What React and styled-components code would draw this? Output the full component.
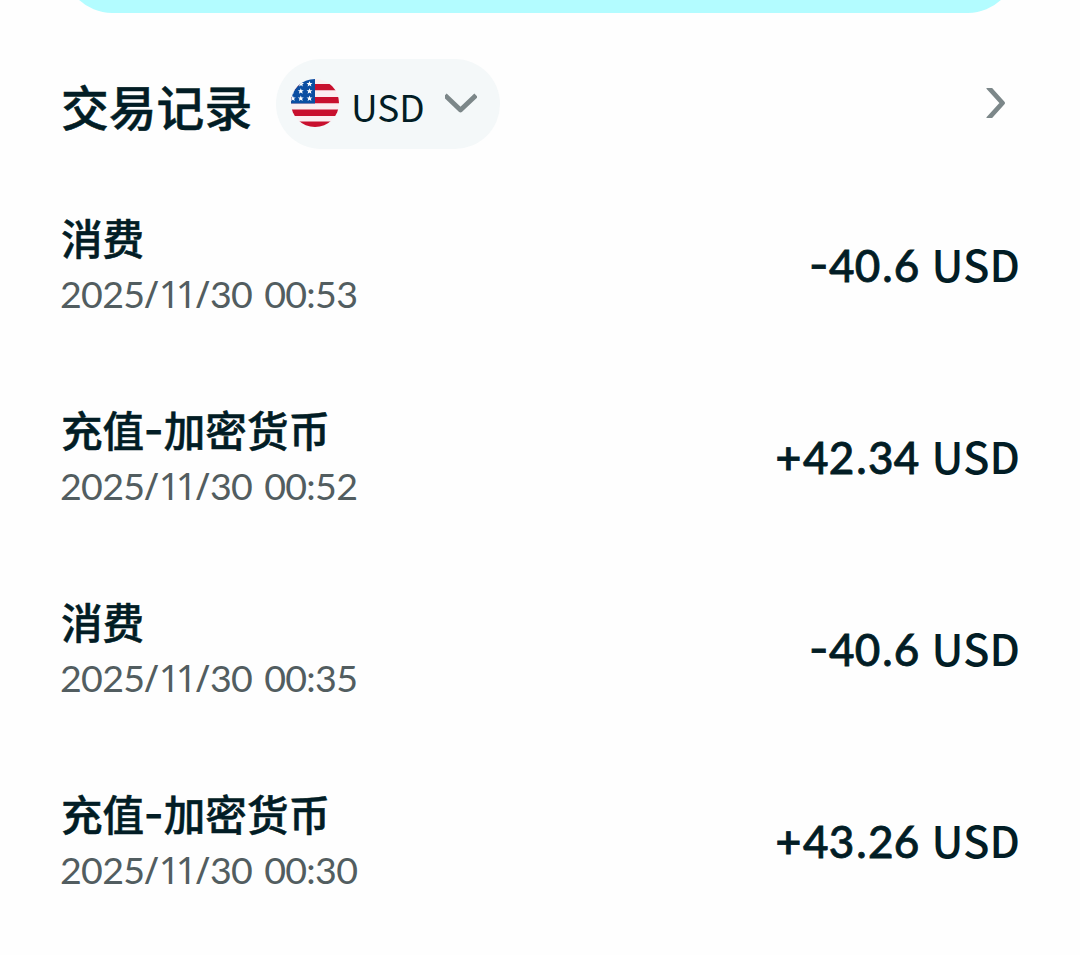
import React from "react";
import styled, { createGlobalStyle } from "styled-components";

const GlobalStyle = createGlobalStyle`
  * {
    box-sizing: border-box;
  }

  body {
    margin: 0;
    background: #fefefe;
    color: #021d25;
    font-family: "Noto Sans CJK SC", "Noto Sans", sans-serif;
  }
`;

const Page = styled.div`
  height: 955px;
  overflow: hidden;
`;

const Banner = styled.div`
  height: 13px;
  margin: 0 64px;
  display: flex;
  align-items: flex-end;
  overflow: hidden;
`;

const BannerFill = styled.div`
  flex: 1;
  height: 96px;
  border-radius: 48px;
  background: #b3fcff;
`;

const Header = styled.header`
  height: 90px;
  margin-top: 46px;
  padding: 0 62px 0 61px;
  display: flex;
  align-items: center;
`;

const Title = styled.h1`
  width: 215px;
  margin: 4px 0 0;
  font-size: 47.8px;
  font-weight: 500;
  line-height: 60px;
  white-space: nowrap;
  -webkit-text-stroke: 0.5px #021d25;
`;

const CurrencyButton = styled.button`
  width: 224px;
  height: 90px;
  padding: 0 22px 2px 15px;
  border: 0;
  border-radius: 45px;
  background: #f4f8f9;
  color: inherit;
  font-family: inherit;
  display: flex;
  align-items: center;
`;

const CurrencyCode = styled.span`
  width: 94px;
  margin: 6px 0 0 12px;
  font-size: 37px;
  line-height: 44px;
  text-align: left;
`;

const MoreButton = styled.button`
  padding: 0;
  border: 0;
  background: none;
  display: flex;
  margin: 0 12px 2px auto;
`;

const List = styled.div`
  padding-top: 20px;
`;

const Row = styled.div`
  height: 192px;
  padding: 0 60px 0 61px;
  display: flex;
  justify-content: space-between;
  align-items: center;
`;

const Info = styled.div`
  display: flex;
  flex-direction: column;
`;

const Kind = styled.div`
  font-size: 41.6px;
  font-weight: 500;
  line-height: 56px;
  -webkit-text-stroke: 0.5px #021d25;
`;

const Dash = styled.span`
  display: inline-block;
  width: 19.5px;
  line-height: 1;
  text-align: center;
  transform: translateY(-3px) scaleX(1.2);
  -webkit-text-stroke: 1px #021d25;
`;

const Time = styled.div`
  margin-left: -1px;
  padding-top: 2px;
  color: #525d60;
  font-family: Lato, "Noto Sans", sans-serif;
  font-size: 37.6px;
  line-height: 54px;
  letter-spacing: -0.7px;
  white-space: nowrap;
`;

const Slash = styled.span`
  font-family: "Noto Sans", sans-serif;
  margin-right: 1px;
`;

const Pair = styled.span`
  font-family: "Noto Sans", sans-serif;
  letter-spacing: -4.5px;
  margin-right: 3px;
`;

const Clock = styled.span`
  margin-left: 12px;
`;

const Amount = styled.div`
  padding-bottom: 2px;
  font-size: 43.6px;
  font-weight: 500;
  line-height: 60px;
  white-space: nowrap;
`;

const Sign = styled.span`
  display: inline-block;
  line-height: 1;
  transform: ${(props) => (props.$minus ? "translateY(-3px) scaleX(1.15)" : "translateY(1px)")};
  margin-right: 2px;
  -webkit-text-stroke: 0.8px #021d25;
`;

const Digits = styled.span`
  font-family: Lato, sans-serif;
  font-size: 44px;
  letter-spacing: 0.4px;
  margin-right: 2px;
  -webkit-text-stroke: 0.8px #021d25;
`;

const Point = styled.span`
  margin: 0 0.8px 0 1.5px;
`;

const records = [
  { kind: "消费", time: "00:53", sign: "-", amount: "40.6" },
  { kind: "充值-加密货币", time: "00:52", sign: "+", amount: "42.34" },
  { kind: "消费", time: "00:35", sign: "-", amount: "40.6" },
  { kind: "充值-加密货币", time: "00:30", sign: "+", amount: "43.26" },
];

const Flag = () => (
  <svg width="48" height="48" viewBox="0 0 48 48">
    <clipPath id="round">
      <circle cx="24" cy="24" r="24" />
    </clipPath>
    <g clipPath="url(#round)">
      <path fill="#fbeef1" d="M0 0h48v48H0z" />
      <path fill="#c8102e" d="M0 5h48v6.3H0zM0 18h48v6.2H0zM0 30.5h48v6.5H0zM0 42.5h48V49H0z" />
      <path fill="#0b4ea2" d="M0 0h24v24.5H0z" />
      {[[18.5, 5], [10, 5], [1, 5], [18.5, 12.2], [9.8, 12.2], [1, 12.2], [18.5, 19.4], [9.8, 19.4], [1.8, 19.4]].map(([x, y]) => (
        <path
          key={`${x}-${y}`}
          fill="#fff"
          transform={`translate(${x} ${y})`}
          d="M0-3 .8-1H3L1.3.4 1.9 2.6 0 1.3-1.9 2.6-1.3.4-3-1h2.2z"
        />
      ))}
    </g>
  </svg>
);

const KindLabel = ({ text }) => {
  const [first, second] = text.split("-");
  return (
    <Kind>
      {first}
      {second && <Dash>-</Dash>}
      {second}
    </Kind>
  );
};

const AmountLabel = ({ sign, amount }) => {
  const [whole, cents] = amount.split(".");
  return (
    <Amount>
      <Sign $minus={sign === "-"}>{sign}</Sign>
      <Digits>
        {whole}
        <Point>.</Point>
        {cents}
      </Digits>
      {" USD"}
    </Amount>
  );
};

const App = () => (
  <>
    <GlobalStyle />
    <Page>
      <Banner>
        <BannerFill />
      </Banner>
      <Header>
        <Title>交易记录</Title>
        <CurrencyButton>
          <Flag />
          <CurrencyCode>USD</CurrencyCode>
          <svg width="32" height="20" viewBox="0 0 32 20" fill="none">
            <path d="M0 2.3 15.5 17 31 2.3" stroke="#7c8789" strokeWidth="4.8" strokeLinejoin="round" />
          </svg>
        </CurrencyButton>
        <MoreButton>
          <svg width="20" height="30" viewBox="0 0 20 30" fill="none">
            <path d="M2 -1 16.5 15 2 31" stroke="#7c8789" strokeWidth="4.8" strokeLinejoin="round" />
          </svg>
        </MoreButton>
      </Header>
      <List>
        {records.map((record) => (
          <Row key={record.time}>
            <Info>
              <KindLabel text={record.kind} />
              <Time>
                2025<Slash>/</Slash><Pair>11</Pair><Slash>/</Slash>30<Clock>{record.time}</Clock>
              </Time>
            </Info>
            <AmountLabel sign={record.sign} amount={record.amount} />
          </Row>
        ))}
      </List>
    </Page>
  </>
);

export default App;
